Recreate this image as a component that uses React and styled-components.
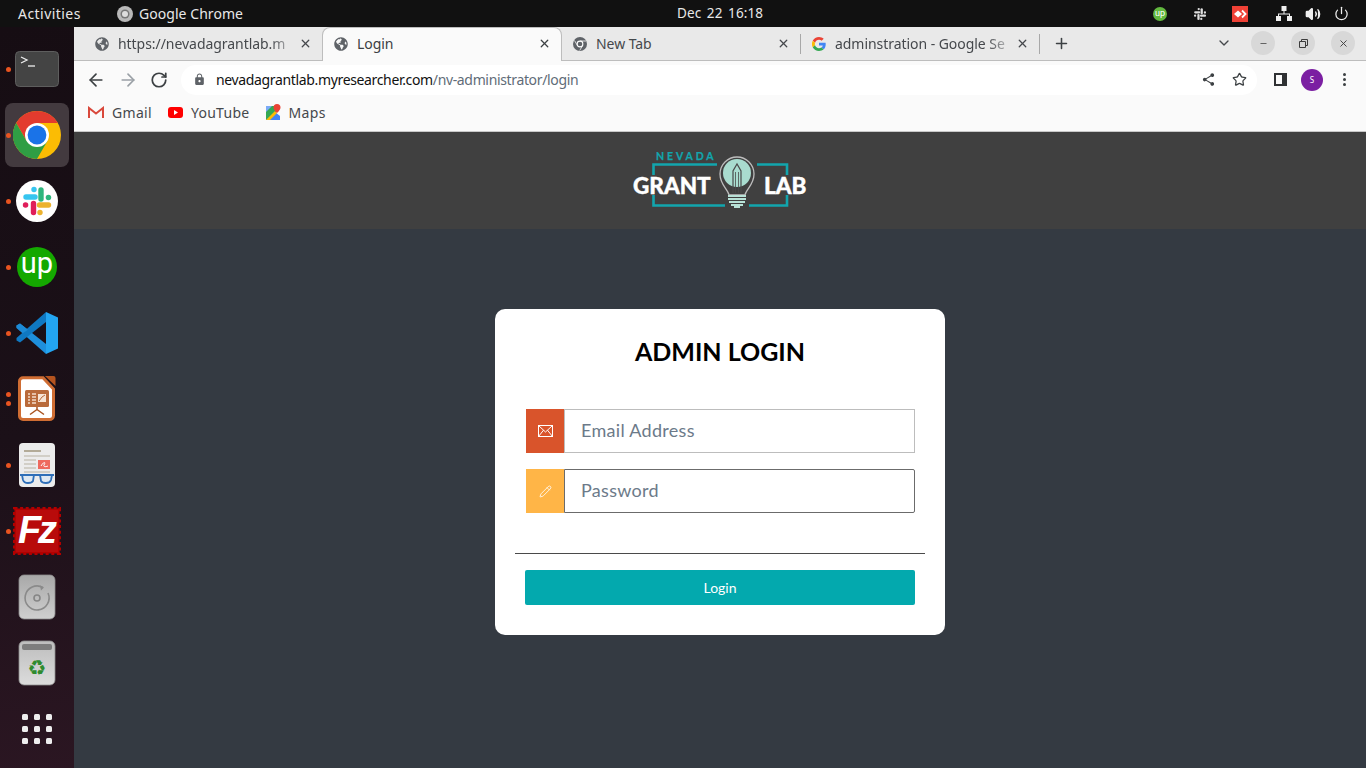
import React from "react";
import styled, { createGlobalStyle } from "styled-components";
import { ArrowLeft, ArrowRight, RotateCw, Star, X, Plus, ChevronDown, Minus, Pencil, Volume2, Power } from "lucide-react";
import { FaGlobeAmericas } from "react-icons/fa";
import { MdLock, MdShare } from "react-icons/md";

const Global = createGlobalStyle`
  html, body { margin: 0; padding: 0; height: 100%; overflow: hidden; background: #343a42; }
  * { box-sizing: border-box; }
`;
const UI = `"Noto Sans", "DejaVu Sans", sans-serif`;
const CARD = `"Lato", "Noto Sans", sans-serif`;

const Desktop = styled.div`width:1366px;height:768px;display:flex;flex-direction:column;overflow:hidden;font-family:${UI};`;
const TopBar = styled.header`height:27px;flex:none;background:#111;color:#e8e8e8;display:flex;align-items:center;font-size:14px;padding-left:18px;position:relative;`;
const Activities = styled.span`letter-spacing:.45px;width:99px;`;
const AppName = styled.span`display:flex;align-items:center;gap:6px;letter-spacing:.05px;`;
const Clock = styled.span`position:absolute;left:677px;top:5px;font-size:13.5px;letter-spacing:.1px;word-spacing:2px;line-height:17px;`;
const Tray = styled.div`margin-left:auto;display:flex;align-items:center;height:27px;padding-right:11px;`;
const TraySlot = styled.span`display:flex;align-items:center;justify-content:center;width:${p=>p.$w}px;`;
const Main = styled.div`flex:1;display:flex;min-height:0;`;
const Dock = styled.nav`width:74px;flex:none;background:linear-gradient(170deg,#160d13 0%,#1b1018 55%,#2b1622 100%);padding-top:9px;display:flex;flex-direction:column;align-items:center;`;
const DockItem = styled.div`width:64px;height:66px;flex:none;position:relative;display:flex;align-items:center;justify-content:center;
  ${p=>p.$active?`&::before{content:"";position:absolute;inset:1px 0;background:#433a3f;border-radius:8px;}`:""}
  > svg{position:relative;}`;
const Dot = styled.i`position:absolute;left:1px;top:${p=>p.$top}px;width:5px;height:5px;border-radius:50%;background:#e95420;z-index:1;`;
const Browser = styled.div`flex:1;display:flex;flex-direction:column;min-width:0;`;
const TabStrip = styled.div`height:34px;flex:none;background:#e9e9e9;display:flex;align-items:flex-end;padding-left:10px;position:relative;border-bottom:1px solid #bdbdbd;`;
const Tab = styled.div`width:${p=>p.$w}px;height:33px;flex:none;position:relative;display:flex;align-items:center;padding:0 8px 0 11px;font-size:14px;color:${p=>p.$active?"#3c4043":"#45484c"};letter-spacing:-.05px;
  ${p=>p.$active?`background:#fafafa;border:1px solid #bdbdbd;border-bottom:none;border-radius:8px 8px 0 0;margin-bottom:-1px;height:34px;padding-bottom:2px;z-index:1;`:""}
  ${p=>p.$sep?`&::after{content:"";position:absolute;right:0;top:7px;height:20px;width:1px;background:#a8a8a8;}`:""}`;
const TabTitle = styled.span`flex:1;margin-left:9px;white-space:nowrap;overflow:hidden;-webkit-mask-image:${p=>p.$fade?"linear-gradient(90deg,#000 84%,transparent)":"none"};`;
const TabClose = styled(X).attrs({size:13,strokeWidth:2.4})`flex:none;margin-right:${p=>p.$mr}px;`;
const NewTab = styled.span`margin-left:13px;display:flex;color:#3c4043;align-self:center;`;
const WinControls = styled.div`margin-left:auto;display:flex;align-items:center;padding-right:11px;padding-bottom:1px;height:33px;`;
const Chevron = styled.span`display:flex;margin-right:19px;color:#45484c;`;
const WinButton = styled.span`width:24px;height:24px;border-radius:50%;background:#d8d8d8;margin-left:${p=>p.$first?0:"16px"};display:flex;align-items:center;justify-content:center;color:#3c3c3c;`;
const Toolbar = styled.div`height:37px;flex:none;background:#fafafa;display:flex;align-items:center;padding-left:12px;`;
const NavButton = styled.span`display:flex;width:32px;color:${p=>p.$off?"#9aa0a6":"#3c4043"};`;
const Omnibox = styled.div`width:1076px;height:30px;margin-left:-1px;background:#fff;border-radius:15px;display:flex;align-items:center;padding-left:12px;`;
const Url = styled.div`font-size:14px;margin-left:10px;color:#5f6c78;letter-spacing:-.35px;white-space:nowrap;`;
const Host = styled.span`color:#111;`;
const OmniEnd = styled.div`margin-left:auto;display:flex;align-items:center;gap:16px;padding-right:10px;color:#3c4043;`;
const ToolEnd = styled.div`display:flex;align-items:center;margin-left:17px;color:#3c4043;`;
const SidePanel = styled.span`width:13px;height:13px;border:2px solid #2f3133;border-right-width:5px;display:block;`;
const Avatar = styled.span`width:22px;height:22px;border-radius:50%;background:#7b1fa2;color:#fff;font-size:8px;display:flex;align-items:center;justify-content:center;margin-left:14px;`;
const Kebab = styled.span`display:flex;flex-direction:column;gap:2px;margin-left:20px;> i{width:3px;height:3px;border-radius:50%;background:#3c4043;display:block;}`;
const Bookmarks = styled.div`height:34px;flex:none;background:#fafafa;border-bottom:1px solid #c8c8c8;display:flex;align-items:center;padding:0 0 5px 14px;gap:16px;font-size:14px;color:#45484c;letter-spacing:.3px;`;
const Bookmark = styled.span`display:flex;align-items:center;gap:8px;`;
const Page = styled.main`flex:1;background:#343a42;display:flex;flex-direction:column;align-items:center;min-height:0;`;
const Banner = styled.div`align-self:stretch;height:97px;flex:none;background:#404040;display:flex;justify-content:center;padding-top:13px;`;
const Card = styled.section`width:450px;height:326px;margin-top:80px;background:#fff;border-radius:10px;padding:0 20px;display:flex;flex-direction:column;font-family:${CARD};`;
const Title = styled.h1`margin:26px 0 0;height:32px;line-height:32px;text-align:center;font-size:25px;font-weight:700;color:#000;`;
const Field = styled.div`display:flex;height:44px;margin:${p=>p.$mt}px 10px 0 11px;`;
const FieldIcon = styled.span`width:38px;flex:none;background:${p=>p.$c};display:flex;align-items:center;justify-content:center;color:#fff;`;
const Input = styled.input`flex:1;min-width:0;border:1px solid ${p=>p.$focus?"#6b6b6b":"#bdbdbd"};border-radius:${p=>p.$focus?"0 2px 2px 0":"0"};padding:0 16px 2px;font:400 18px ${CARD};color:#333;outline:none;background:#fff;
  &::placeholder{color:#6c7a89;opacity:1;letter-spacing:.3px;}`;
const Divider = styled.hr`margin:40px 0 0;border:0;border-top:1px solid #4a4a4a;height:0;`;
const Submit = styled.button`margin:16px 10px 0;height:35px;border:0;border-radius:2px;background:#03a9ae;color:#fff;padding:0 0 1px;font:400 14px ${CARD};`;

const globe = <FaGlobeAmericas size={14} color="#5f6368" style={{flex:"none"}}/>;

const ChromeLogo = ({s=48}) => (
  <svg width={s} height={s} viewBox="0 0 48 48">
    <circle cx="24" cy="24" r="24" fill="#fbbc04"/>
    <path d="M24 0A24 24 0 0 0 3.2 12L13.6 30 24 12H44.8A24 24 0 0 0 24 0Z" fill="#e33b2e"/>
    <path d="M3.2 12A24 24 0 0 0 24 48L34.4 30H13.6Z" fill="#2f9e44"/>
    <circle cx="24" cy="24" r="12" fill="#fff"/>
    <circle cx="24" cy="24" r="9.4" fill="#1a73e8"/>
  </svg>
);
const Slack = ({mono, s=42}) => {
  const c = mono ? ["#ddd","#ddd","#ddd","#ddd"] : ["#36c5f0","#2eb67d","#ecb22e","#e01e5a"];
  return (
    <svg width={s} height={s} viewBox="0 0 42 42">
      {!mono && <circle cx="21" cy="21" r="21" fill="#fff"/>}
      <g strokeLinecap="round" strokeWidth="5.4" fill="none">
        <path d="M10 17H19" stroke={c[0]}/><path d="M18 9.5V9.6" stroke={c[0]}/>
        <path d="M25 10V19" stroke={c[1]}/><path d="M32.5 17.5H32.4" stroke={c[1]}/>
        <path d="M23.500 25H32.500" stroke={c[2]}/><path d="M24 32.500V32.400" stroke={c[2]}/>
        <path d="M17.500 23.500V32.500" stroke={c[3]}/><path d="M9.500 25H9.600" stroke={c[3]}/>
      </g>
    </svg>
  );
};
const Upwork = ({s=40, fs=29, fill="#14a800", y=26}) => (
  <svg width={s} height={s} viewBox="0 0 40 40">
    <circle cx="20" cy="20" r="20" fill={fill}/>
    <text x="20" y={y} textAnchor="middle" fontFamily="Roboto, sans-serif" fontWeight="400" fontSize={fs} fill="#fff">up</text>
  </svg>
);
const VSCode = () => (
  <svg width="44" height="44" viewBox="0 0 44 44">
    <path d="M1.500 14.500 5 12.500 31 33V43L1.500 17Z" fill="#1e8fdc" />
    <path d="M1.500 29.500 5 31.500 31 11V1L1.500 27Z" fill="#0f78c2"/>
    <path d="M31 1 43 6.500V37.500L31 43Z" fill="#23a5f1"/>
    <path d="M1.500 14.500 5 12.500 13 18.700 8 22 1.500 16.500Z" fill="#1c8ad6"/>
  </svg>
);
const Impress = () => (
  <svg width="38" height="46" viewBox="0 0 38 46">
    <path d="M5 1.700H25L35.500 13V39.500A4 4 0 0 1 31.500 43.500H5A3.500 3.500 0 0 1 1.500 40V5.200A3.500 3.500 0 0 1 5 1.700Z" fill="#fff" stroke="#cf6d33" strokeWidth="3"/>
    <path d="M27 0H35.500A2 2 0 0 1 37.500 2V10Z" fill="#b5541f"/>
    <rect x="7" y="14" width="24" height="17" rx="1.500" fill="#b96a3a"/>
    <path d="M10 18H12M10 21H12M10 24H12M10 27H12M14 18H18M14 21H18M14 24H18M14 27H18" stroke="#f3dcc9" strokeWidth="1.600"/>
    <rect x="20" y="18" width="8" height="8" fill="#f7e4d4"/>
    <path d="M21 25 24 21 27 19" stroke="#b96a3a" fill="none"/>
    <path d="M19 31V34M19 33.500 12 38.500M19 33.500 26 38.500" stroke="#a9521e" strokeWidth="1.500" fill="none"/>
  </svg>
);
const Reader = () => (
  <svg width="38" height="46" viewBox="0 0 38 46">
    <rect x="1" y="1" width="36" height="44" rx="4" fill="#ececec"/>
    <rect x="6" y="8" width="17" height="2" fill="#b3ab98"/>
    <path d="M6 14H32M6 18H18M6 22H18M6 26H18M6 30H32" stroke="#c9c5bb" strokeWidth="1.500"/>
    <rect x="20" y="18" width="12" height="9" fill="#ee6a5e"/>
    <path d="M23 24C26 19 28 20 26 23 25 25 28 25 30 24" stroke="#fff" fill="none"/>
    <path d="M2 33H36" stroke="#2f6fb8" strokeWidth="1.800"/>
    <path d="M4 33H16L15 39Q14 41 10 41 6 41 5 38ZM22 33H34L33 38Q32 41 28 41 24 41 23 39Z" fill="#dfe9f2" stroke="#2f6fb8" strokeWidth="1.800"/>
  </svg>
);
const FileZilla = () => (
  <svg width="48" height="48" viewBox="0 0 48 48">
    <rect x="1.500" y="1.500" width="45" height="45" fill="#b30000" stroke="#b30000" strokeWidth="3" strokeDasharray="3 2.600"/>
    <rect x="3" y="3" width="42" height="42" fill="#b80b0b"/>
    <text x="23" y="36" textAnchor="middle" fontFamily="'Liberation Sans', sans-serif" fontWeight="700" fontStyle="italic" fontSize="38" fill="#fff" letterSpacing="-3">Fz</text>
  </svg>
);
const Disc = () => (
  <svg width="38" height="46" viewBox="0 0 38 46">
    <defs><linearGradient id="dg" x1="0" y1="0" x2="0" y2="1"><stop offset="0" stopColor="#a8a8a8"/><stop offset="1" stopColor="#cfcfcf"/></linearGradient></defs>
    <rect x="1" y="1" width="36" height="44" rx="5" fill="url(#dg)" stroke="#8d8d8d" strokeWidth=".8"/>
    <path d="M25 13.500A12 12 0 1 0 30 19" fill="none" stroke="#8a8a8a" strokeWidth="1.600"/>
    <path d="M22 11.500 26 13.500 23 16.500Z" fill="#8a8a8a"/>
    <circle cx="19" cy="24" r="3" fill="none" stroke="#868686" strokeWidth="1.600"/>
  </svg>
);
const Trash = () => (
  <svg width="38" height="46" viewBox="0 0 38 46">
    <defs><linearGradient id="tg" x1="0" y1="0" x2="0" y2="1"><stop offset="0" stopColor="#bdbdbd"/><stop offset="1" stopColor="#dcdcdc"/></linearGradient></defs>
    <rect x="1" y="1" width="36" height="44" rx="5" fill="url(#tg)" stroke="#8d8d8d" strokeWidth=".8"/>
    <rect x="4" y="4" width="30" height="6" rx="2" fill="#7d7d7d"/>
    <text x="19" y="35" textAnchor="middle" fontFamily="'DejaVu Sans', sans-serif" fontSize="21" fill="#2e8b2e">♻</text>
  </svg>
);
const AppGrid = () => (
  <svg width="32" height="32" viewBox="0 0 32 32" fill="#eeeeee">
    {[0,1,2].flatMap(r=>[0,1,2].map(c=><rect key={r+"-"+c} x={1+c*12} y={1+r*12} width="6" height="6" rx="1.500"/>))}
  </svg>
);
const Terminal = () => (
  <svg width="44" height="36" viewBox="0 0 44 36">
    <rect x=".5" y=".5" width="43" height="35" rx="4" fill="#444" stroke="#5e5e5e"/>
    <path d="M6 6 12 9 6 12" stroke="#eee" fill="none" strokeWidth="1.300"/>
    <path d="M13 15H20" stroke="#eee" strokeWidth="1.300"/>
  </svg>
);
const Gmail = () => (
  <svg width="16" height="12" viewBox="0 0 16 12">
    <path d="M1 12V2L8 7.500 15 2V12" fill="none" stroke="#d9483b" strokeWidth="2"/>
  </svg>
);
const YouTube = () => (
  <svg width="15" height="11" viewBox="0 0 15 11"><rect width="15" height="11" rx="3" fill="#f00"/><path d="M6 3 10 5.500 6 8Z" fill="#fff"/></svg>
);
const Maps = () => (
  <svg width="15" height="16" viewBox="0 0 15 16">
    <path d="M0 2 10 2V16H0Z" fill="#34a853"/>
    <path d="M0 2 6 2 0 8Z" fill="#7baaf7"/>
    <path d="M0 16 9 8 14 12V16Z" fill="#4285f4"/>
    <path d="M0 16 9 7 11 9 4 16Z" fill="#fbbc04"/>
    <path d="M11 0A3.500 3.500 0 0 1 14.500 3.500C14.500 6 11 9 11 9S7.500 6 7.500 3.500A3.500 3.500 0 0 1 11 0Z" fill="#ea4335"/>
  </svg>
);
const GoogleG = () => (
  <svg width="14" height="14" viewBox="0 0 48 48" style={{flex:"none"}}>
    <path fill="#EA4335" d="M24 9.500c3.500 0 6.700 1.200 9.200 3.600l6.900-6.900C35.900 2.400 30.500 0 24 0 14.600 0 6.500 5.400 2.600 13.200l8 6.200C12.400 13.700 17.700 9.500 24 9.500z"/>
    <path fill="#4285F4" d="M47 24.500c0-1.600-.1-3.100-.4-4.500H24v9h13c-.6 3-2.300 5.500-4.800 7.200l7.700 6C44.400 38 47 31.800 47 24.500z"/>
    <path fill="#FBBC05" d="M10.500 28.600A14.500 14.500 0 0 1 10.500 19.400l-8-6.200a24 24 0 0 0 0 21.600z"/>
    <path fill="#34A853" d="M24 48c6.500 0 11.900-2.100 15.900-5.800l-7.700-6c-2.200 1.400-4.900 2.300-8.200 2.300-6.300 0-11.600-4.200-13.500-9.900l-8 6.200C6.500 42.600 14.600 48 24 48z"/>
  </svg>
);
const TabChrome = () => (
  <svg width="14" height="14" viewBox="0 0 14 14" style={{flex:"none"}}>
    <circle cx="7" cy="7" r="7" fill="#5f6368"/>
    <path d="M7 4H13M4.400 8.500 1.500 3.500M9.600 8.500 6.700 13.500" stroke="#e9e9e9" strokeWidth=".9"/>
    <circle cx="7" cy="7" r="3.400" fill="#fff"/><circle cx="7" cy="7" r="2.300" fill="#5f6368"/>
  </svg>
);
const EnvelopeIcon = () => (
  <svg width="15" height="12" viewBox="0 0 15 12" fill="none" stroke="#fff" strokeWidth="1">
    <rect x=".5" y=".5" width="14" height="11"/>
    <path d="M.5 .5 7.500 7 14.500 .5M.5 11.500 5.500 5.200M14.500 11.500 9.500 5.200"/>
  </svg>
);
const RedApp = () => (
  <svg width="16" height="16" viewBox="0 0 16 16">
    <rect width="16" height="16" fill="#ef4136"/>
    <path d="M2 8 6 4.500 10 8 6 11.500Z" fill="#fff"/><path d="M10 4.500 13.500 8 10 11.500" fill="none" stroke="#fff" strokeWidth="1.800"/>
  </svg>
);
const Network = () => (
  <svg width="16" height="15" viewBox="0 0 16 15" fill="#eee">
    <rect x="5.500" y="0" width="5" height="5"/><rect x="0" y="10" width="5" height="5"/><rect x="11" y="10" width="5" height="5"/>
    <path d="M7.500 5H8.500V7.500H14V10H13V8.500H3V10H2V7.500H7.500Z"/>
  </svg>
);
const TrayChrome = () => (
  <svg width="16" height="16" viewBox="0 0 16 16"><circle cx="8" cy="8" r="8" fill="#b9b9b9"/><circle cx="8" cy="8" r="4.500" fill="#777"/><circle cx="8" cy="8" r="3" fill="#ddd"/></svg>
);
const Logo = () => (
  <svg width="200" height="70" viewBox="0 0 200 70">
    <text x="36" y="15" fontFamily="Lato, sans-serif" fontWeight="700" fontSize="10.500" letterSpacing="2.900" fill="#12a5ad" stroke="#12a5ad" strokeWidth=".25">NEVADA</text>
    <path d="M33.500 30V19.500H97M137 19.500H167V30M33.500 50V60.500H105M129 60.500H167V50" fill="none" stroke="#12a5ad" strokeWidth="2.600"/>
    <text x="13" y="49" fontFamily="Lato, sans-serif" fontWeight="900" fontSize="22.500" fill="#fff" stroke="#fff" strokeWidth=".4">GRANT</text>
    <text x="144" y="49" fontFamily="Lato, sans-serif" fontWeight="900" fontSize="22.500" fill="#fff" stroke="#fff" strokeWidth=".4">LAB</text>
    <path d="M109 50C108 44 100 40 100 29A17 17 0 0 1 134 29C134 40 126 44 125 50Z" fill="#404040" stroke="#bdbdbd" strokeWidth="1.300"/>
    <circle cx="117" cy="28" r="14" fill="#a9dccf"/>
    <path d="M113 48V26L117 19 121 26V48" fill="none" stroke="#4a4a4a" strokeWidth="1.200"/>
    <path d="M115.500 48V27M118.500 48V27" stroke="#4a4a4a" strokeWidth=".8"/>
    <path d="M108 51H126M108 54H126M109 57H125M111 60H123" stroke="#b8e2d7" strokeWidth="2"/>
    <path d="M114 62H120" stroke="#b8e2d7" strokeWidth="2"/>
  </svg>
);

const dockApps = [
  { el:<Terminal/>, dots:[31] },
  { el:<ChromeLogo/>, dots:[31], active:true },
  { el:<Slack/>, dots:[31] },
  { el:<Upwork/>, dots:[31] },
  { el:<VSCode/>, dots:[31] },
  { el:<Impress/>, dots:[26,35] },
  { el:<Reader/>, dots:[31] },
  { el:<FileZilla/>, dots:[31] },
  { el:<Disc/>, dots:[] },
  { el:<Trash/>, dots:[] },
  { el:<AppGrid/>, dots:[] },
];

export default function App() {
  return (
    <Desktop>
      <Global/>
      <TopBar>
        <Activities>Activities</Activities>
        <AppName><TrayChrome/>Google Chrome</AppName>
        <Clock>Dec 22  16:18</Clock>
        <Tray>
          <TraySlot $w={58}><Upwork s={14} fs={26} fill="#62b83f" y={25}/></TraySlot>
          <TraySlot $w={22}><Slack mono s={18}/></TraySlot>
          <TraySlot $w={58}><RedApp/></TraySlot>
          <TraySlot $w={30}><Network/></TraySlot>
          <TraySlot $w={28}><Volume2 size={16} color="#eee" fill="#eee"/></TraySlot>
          <TraySlot $w={28}><Power size={15} color="#eee"/></TraySlot>
        </Tray>
      </TopBar>
      <Main>
        <Dock>
          {dockApps.map((a,i)=>(
            <DockItem key={i} $active={a.active}>
              {a.dots.map(t=><Dot key={t} $top={t}/>)}
              {a.el}
            </DockItem>
          ))}
        </Dock>
        <Browser>
          <TabStrip>
            <Tab $w={238}>{globe}<TabTitle $fade>https://nevadagrantlab.m</TabTitle><TabClose $mr={2}/></Tab>
            <Tab $w={240} $active>{globe}<TabTitle>Login</TabTitle><TabClose $mr={2}/></Tab>
            <Tab $w={239} $sep><TabChrome/><TabTitle>New Tab</TabTitle><TabClose $mr={3}/></Tab>
            <Tab $w={239} $sep><GoogleG/><TabTitle $fade>adminstration - Google Se</TabTitle><TabClose $mr={3}/></Tab>
            <NewTab><Plus size={17} strokeWidth={2.200}/></NewTab>
            <WinControls>
              <Chevron><ChevronDown size={16}/></Chevron>
              <WinButton $first><Minus size={9}/></WinButton>
              <WinButton><svg width="9" height="9" viewBox="0 0 9 9" fill="none" stroke="#3c3c3c"><path d="M2.500 2.500V.5H8.500V6.500H6.500M.5 2.500H6.500V8.500H.5Z"/></svg></WinButton>
              <WinButton><X size={11}/></WinButton>
            </WinControls>
          </TabStrip>
          <Toolbar>
            <NavButton><ArrowLeft size={20}/></NavButton>
            <NavButton $off><ArrowRight size={20}/></NavButton>
            <NavButton><RotateCw size={18} strokeWidth={2.300}/></NavButton>
            <Omnibox>
              <MdLock size={13} color="#5f6368"/>
              <Url><Host>nevadagrantlab.myresearcher.com</Host>/nv-administrator/login</Url>
              <OmniEnd>
                <MdShare size={15}/>
                <Star size={15}/>
              </OmniEnd>
            </Omnibox>
            <ToolEnd>
              <SidePanel/>
              <Avatar>S</Avatar>
              <Kebab><i/><i/><i/></Kebab>
            </ToolEnd>
          </Toolbar>
          <Bookmarks>
            <Bookmark><Gmail/>Gmail</Bookmark>
            <Bookmark><YouTube/>YouTube</Bookmark>
            <Bookmark><Maps/>Maps</Bookmark>
          </Bookmarks>
          <Page>
            <Banner><Logo/></Banner>
            <Card>
              <Title>ADMIN LOGIN</Title>
              <Field $mt={42}>
                <FieldIcon $c="#d9542b"><EnvelopeIcon/></FieldIcon>
                <Input placeholder="Email Address" readOnly/>
              </Field>
              <Field $mt={16}>
                <FieldIcon $c="#ffb547"><Pencil size={13} strokeWidth={1.500}/></FieldIcon>
                <Input placeholder="Password" $focus readOnly/>
              </Field>
              <Divider/>
              <Submit>Login</Submit>
            </Card>
          </Page>
        </Browser>
      </Main>
    </Desktop>
  );
}
